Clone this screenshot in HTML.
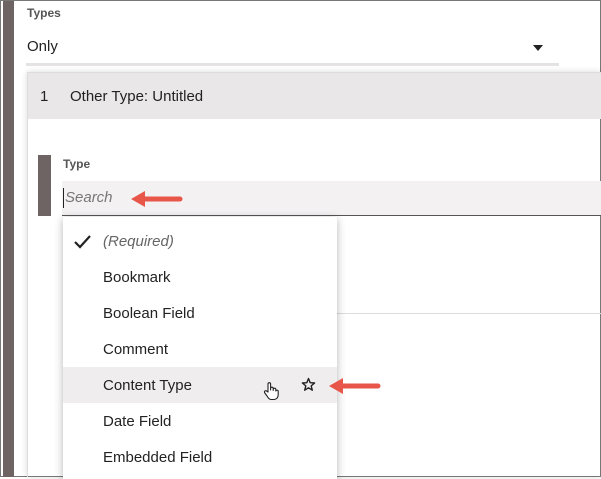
<!DOCTYPE html>
<html><head><style>
*{margin:0;padding:0;box-sizing:border-box}
body{width:601px;height:477px;overflow:hidden;background:#fff;font-family:"Liberation Sans",sans-serif;position:relative;color:#222}
.a{position:absolute}
.i{font-size:15px}
</style></head><body>
<div class="a" style="left:0;top:0;width:601px;height:477px;border:1px solid #777"></div>
<div class="a" style="left:3px;top:1px;width:11px;height:476px;background:#6e6464"></div>
<div class="a" style="left:27px;top:6px;font-size:12px;font-weight:bold;color:#555">Types</div>
<div class="a" style="left:27px;top:38px;font-size:15px;color:#222">Only</div>
<div class="a" style="left:533px;top:45px;width:0;height:0;border-left:5px solid transparent;border-right:5px solid transparent;border-top:6px solid #222"></div>
<div class="a" style="left:26px;top:63px;width:533px;height:3px;background:#e4e2e2"></div>
<div class="a" style="left:27px;top:72px;width:574px;height:405px;border-left:1px solid #ddd;border-top:1px solid #ddd;box-shadow:0 0 6px rgba(0,0,0,.15)"></div>
<div class="a" style="left:28px;top:73px;width:573px;height:46px;background:#e9e7e8"></div>
<div class="a i" style="left:40px;top:88px">1</div>
<div class="a i" style="left:70px;top:88px">Other Type: Untitled</div>
<div class="a" style="left:38px;top:155px;width:13px;height:61px;background:#6e6464"></div>
<div class="a" style="left:63px;top:157px;font-size:12px;font-weight:bold;color:#555">Type</div>
<div class="a" style="left:62px;top:181px;width:539px;height:35px;background:#f3f1f2;border-bottom:1px solid #555"></div>
<div class="a" style="left:63px;top:188px;width:1px;height:20px;background:#222"></div>
<div class="a" style="left:65px;top:189px;font-size:15px;font-style:italic;color:#777">Search</div>
<div class="a" style="left:337px;top:313px;width:264px;height:1px;background:#ddd"></div>
<div class="a" style="left:63px;top:217px;width:274px;height:262px;background:#fff;box-shadow:0 2px 8px rgba(0,0,0,.3)"></div>
<div class="a" style="left:63px;top:367px;width:274px;height:36px;background:#efeded"></div>
<svg class="a" style="left:73px;top:234px" width="20" height="16"><path d="M2 8 L7 13 L17 2" stroke="#222" stroke-width="2.2" fill="none"/></svg>
<div class="a i" style="left:103px;top:233px;font-style:italic;color:#666">(Required)</div>
<div class="a i" style="left:103px;top:269px">Bookmark</div>
<div class="a i" style="left:103px;top:305px">Boolean Field</div>
<div class="a i" style="left:103px;top:341px">Comment</div>
<div class="a i" style="left:103px;top:377px">Content Type</div>
<div class="a i" style="left:103px;top:413px">Date Field</div>
<div class="a i" style="left:103px;top:449px">Embedded Field</div>
<svg class="a" style="left:301px;top:377px" width="15" height="15"><path d="M7.5 1.5 L9.2 5.7 L13.6 6 L10.2 8.9 L11.3 13.2 L7.5 10.8 L3.7 13.2 L4.8 8.9 L1.4 6 L5.8 5.7 Z" fill="none" stroke="#222" stroke-width="1.4" stroke-linejoin="round"/></svg>
<svg class="a" style="left:262px;top:381px" width="18" height="20"><path d="M6 11 V3 a1.3 1.3 0 0 1 2.6 0 V9 V7.5 a1.3 1.3 0 0 1 2.6 0 V9.5 V8.5 a1.3 1.3 0 0 1 2.6 0 V10 a1.3 1.3 0 0 1 2.4 0 V14 Q16 18 12 18.5 H9 Q7 18.5 5 15 L2.5 11.5 a1.3 1.3 0 0 1 2 -1.5 Z" fill="#fff" stroke="#222" stroke-width="1.1" stroke-linejoin="round"/></svg>
<svg class="a" style="left:128px;top:189px" width="58" height="22"><path d="M52 10 L14 10" stroke="#e8564a" stroke-width="5" stroke-linecap="round"/><path d="M3 10 L17 2 L17 18 Z" fill="#e8564a"/></svg>
<svg class="a" style="left:326px;top:376px" width="58" height="22"><path d="M52 10 L14 10" stroke="#e8564a" stroke-width="5" stroke-linecap="round"/><path d="M3 10 L17 2 L17 18 Z" fill="#e8564a"/></svg>
</body></html>
